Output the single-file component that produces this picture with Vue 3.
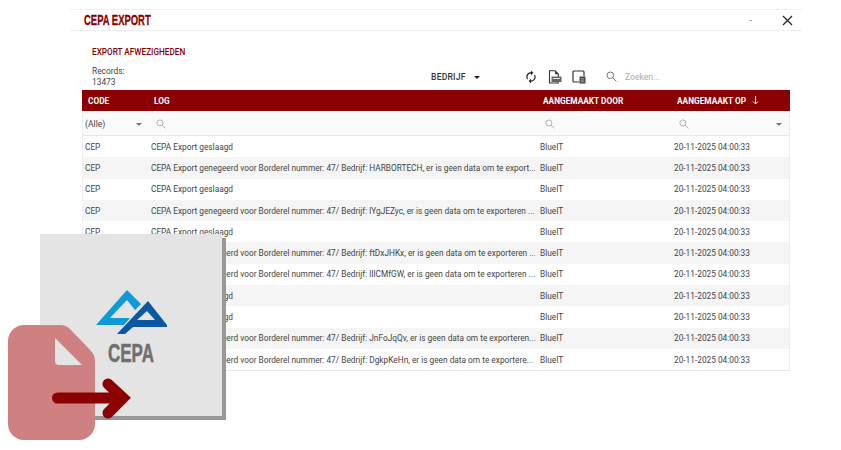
<script setup>
const tail = ', er is geen data om te '
const pre = 'CEPA Export genegeerd voor Borderel nummer: 47/ Bedrijf: '
const ok = 'CEPA Export geslaagd'
const rows = [ok, pre + 'HARBORTECH' + tail + 'export...', ok, pre + 'lYgJEZyc' + tail + 'exporteren ...', ok, pre + 'ftDxJHKx' + tail + 'exporteren ...', pre + 'lIlCMfGW' + tail + 'exporteren ...', ok, ok, pre + 'JnFoJqQv' + tail + 'exporteren...', pre + 'DgkpKeHn' + tail + 'exportere...']
</script>

<template>
  <div class="page">
    <div class="win">
      <header class="titlebar">
        <h1 class="title"><span>CEPA EXPORT</span></h1>
        <div class="winbtns">
          <span class="min">-</span>
          <svg class="close" width="11" height="11" viewBox="0 0 11 11"><path d="M1 1l9 9M10 1l-9 9" stroke="#222" stroke-width="1.2" fill="none"/></svg>
        </div>
      </header>
      <div class="body">
        <div class="subtitle">EXPORT AFWEZIGHEDEN</div>
        <div class="toolbar">
          <div class="records">Records:<br>13473</div>
          <div class="group">BEDRIJF<i class="caret dark"></i></div>
          <div class="tools">
            <svg width="14" height="14" viewBox="2 0 20 24"><path transform="matrix(-1 0 0 1 24 0)" d="M12 4V1L8 5l4 4V6c3.31 0 6 2.69 6 6 0 1.01-.25 1.97-.7 2.8l1.46 1.46C19.54 15.03 20 13.57 20 12c0-4.42-3.58-8-8-8zm0 14c-3.31 0-6-2.69-6-6 0-1.01.25-1.97.7-2.8L5.24 7.74C4.46 8.97 4 10.43 4 12c0 4.42 3.58 8 8 8v3l4-4-4-4v3z" fill="#222"/></svg>
            <svg width="14" height="14" viewBox="0 0 14 14"><path d="M1.5 .8h5.6l3.2 3.2v9H1.5z" fill="none" stroke="#333" stroke-width="1.1"/><path d="M7 .8v3.4h3.3z" fill="#333"/><rect x="3.5" y="6.5" width="10" height="5.5" fill="#666"/><rect x="5" y="8" width="7" height="1" fill="#ddd"/></svg>
            <svg width="14" height="14" viewBox="0 0 14 14"><path d="M7 12H2a1 1 0 0 1-1-1V2a1 1 0 0 1 1-1h9a1 1 0 0 1 1 1v4" fill="none" stroke="#333" stroke-width="1.2"/><rect x="7.5" y="6.5" width="6" height="7" fill="#444"/><path d="M8.7 8.7h3.6M8.7 10.2h3.6M8.7 11.7h3.6" stroke="#ccc" stroke-width=".6"/></svg>
          </div>
          <div class="search">
            <svg class="lens" width="11" height="11" viewBox="0 0 11 11" fill="none" stroke="#777" stroke-width="1"><circle cx="4.3" cy="4.3" r="3.3"/><path d="M6.8 6.8l3.6 3.6"/></svg>
            <span>Zoeken...</span>
          </div>
        </div>
        <div class="table">
          <div class="row head">
            <div>CODE</div><div>LOG</div><div>AANGEMAAKT DOOR</div>
            <div class="sorted">AANGEMAAKT OP<svg width="7" height="9" viewBox="0 0 7 9" fill="none" stroke="#fff" stroke-width="1"><path d="M3.5 0v8M1 5.5L3.5 8 6 5.5"/></svg></div>
          </div>
          <div class="row filter">
            <div class="fcell">(Alle)<i class="caret"></i></div>
            <div class="fcell"><svg class="lens" width="10" height="10" viewBox="0 0 11 11" fill="none" stroke="#aaa" stroke-width="1"><circle cx="4.3" cy="4.3" r="3.3"/><path d="M6.8 6.8l3.6 3.6"/></svg></div>
            <div class="fcell"><svg class="lens" width="10" height="10" viewBox="0 0 11 11" fill="none" stroke="#aaa" stroke-width="1"><circle cx="4.3" cy="4.3" r="3.3"/><path d="M6.8 6.8l3.6 3.6"/></svg></div>
            <div class="fcell"><svg class="lens" width="10" height="10" viewBox="0 0 11 11" fill="none" stroke="#aaa" stroke-width="1"><circle cx="4.3" cy="4.3" r="3.3"/><path d="M6.8 6.8l3.6 3.6"/></svg><i class="caret"></i></div>
          </div>
          <div v-for="(r, i) in rows" :key="i" class="row data" :class="{ alt: i % 2 === 1 }">
            <div>CEP</div><div class="log">{{ r }}</div><div>BlueIT</div><div>20-11-2025 04:00:33</div>
          </div>
        </div>
      </div>
    </div>

    <div class="card">
      <svg class="logo" width="72" height="46" viewBox="0 0 72 46">
        <path d="M0 36L31 1l14 14-6 6-8-10-17 18h20l-6 7z" fill="#0f9ad6"/>
        <path d="M21 45L52 12l19 24v2H37l-8 7zM41 31h18l-8-9z" fill="#0b57a4" fill-rule="evenodd"/>
      </svg>
      <div class="cepa"><span>CEPA</span></div>
    </div>
    <svg class="fileicon" width="124" height="116" viewBox="0 0 124 116">
      <path d="M16 0h36a14 14 0 0 1 10 4l21 22a14 14 0 0 1 4 10v63a16 16 0 0 1-16 16H16A16 16 0 0 1 0 99V16A16 16 0 0 1 16 0z" fill="#cf8080"/>
      <path d="M47 13l27 27H51a4 4 0 0 1-4-4z" fill="#e4e4e4"/>
      <path d="M49.500 73H115M100 59l15 14-15 15" stroke="#8b0000" stroke-width="11" stroke-linecap="round" stroke-linejoin="miter" fill="none"/>
    </svg>
  </div>
</template>

<style scoped>
.page { position: relative; width: 841px; height: 450px; background: #fff; overflow: hidden; font-family: Roboto, "Liberation Sans", sans-serif; color: #333; }
.win { margin-left: 70px; width: 732px; padding-top: 9px; }
.titlebar { height: 20px; display: flex; align-items: center; justify-content: space-between; border-top: 1px solid #f0f0f0; border-bottom: 1px solid #eee; padding-left: 14px; }
.title { margin: 0; font: 700 15.500px/20px "Liberation Sans", sans-serif; color: #8b0000; width: 66px; white-space: nowrap; }
.title span { display: inline-block; transform: scaleX(.61); transform-origin: left center; -webkit-text-stroke: .3px #8b0000; }
.winbtns { display: flex; align-items: center; margin-right: 9px; }
.min { font-size: 9px; color: #666; margin-right: 30px; }
.body { padding: 0 12px; }
.subtitle { margin: 14.500px 0 0 10px; font-size: 8.2px; line-height: 12px; font-weight: 500; color: #8b0000; }
.toolbar { display: flex; align-items: center; height: 29px; margin-top: 3.500px; padding: 3px 0 0 10px; box-sizing: border-box; }
.records { font-size: 8.4px; line-height: 11px; width: 339px; color: #444; }
.group { width: 93px; font-size: 8.6px; font-weight: 500; letter-spacing: .2px; display: flex; align-items: center; color: #333; }
.caret { display: inline-block; width: 0; height: 0; border-left: 3.500px solid transparent; border-right: 3.500px solid transparent; border-top: 3.500px solid #777; margin-left: auto; }
.caret.dark { border-top-color: #222; margin-left: 8px; }
.tools { display: flex; align-items: center; gap: 10px; width: 82px; }
.search { display: flex; align-items: center; gap: 8px; align-self: stretch; margin-top: -3px; font-size: 8.6px; color: #aaa; width: 176px; box-sizing: border-box; border-bottom: 1px solid #eee; padding-top: 3px; }
.table { width: 708px; border-bottom: 1px solid #e8e8e8; border-right: 1px solid #eee; border-left: 1px solid #eee; box-sizing: border-box; }
.row { display: grid; grid-template-columns: 66px 389px 134px 1fr; align-items: center; font-size: 8.3px; }
.head { height: 21px; background: #8b0000; color: #fff; font-weight: 700; font-size: 8.3px; margin: 0 -1px; }
.head > div { padding-left: 6px; }
.head .sorted { display: flex; align-items: center; gap: 6px; }
.filter { height: 25px; background: #fafafa; border-bottom: 1px solid #e8e8e8; box-sizing: border-box; color: #444; font-size: 8.6px; padding-top: 2px; }
.fcell { display: flex; align-items: center; padding: 0 7px 0 2px; }
.fcell .lens { margin-left: 5px; }
.data { height: 21.300px; color: #444; }
.data > div { padding-left: 2px; white-space: nowrap; overflow: hidden; }
.alt { background: #f5f5f5; }
.card { position: absolute; left: 40px; top: 234px; width: 182px; height: 182px; background: #e4e4e4; box-shadow: 4px 4px 0 #979797; display: flex; flex-direction: column; align-items: center; }
.logo { margin: 55px 0 0 2px; }
.cepa { margin-top: 2.500px; width: 47px; font: 700 25px/30px "Liberation Sans", sans-serif; color: #6f6f6f; white-space: nowrap; }
.cepa span { display: inline-block; transform: scaleX(.68); transform-origin: left center; -webkit-text-stroke: .5px #6f6f6f; }
.fileicon { position: absolute; left: 8px; top: 325px; }
</style>
